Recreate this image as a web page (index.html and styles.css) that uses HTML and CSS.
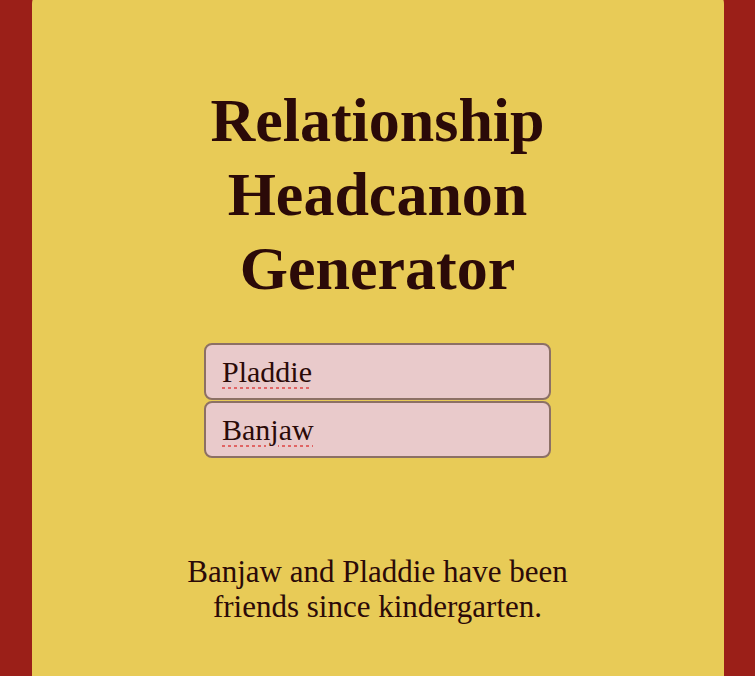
FILE: index.html
```html
<!DOCTYPE html>
<html lang="en">
<head>
  <meta charset="UTF-8">
  <title>Relationship Headcanon Generator</title>
  <link rel="stylesheet" href="styles.css">
</head>
<body>
  <div class="card">
    <h1 class="title">Relationship Headcanon Generator</h1>

    <div class="names">
      <input class="name-input" type="text" value="Pladdie">
      <input class="name-input" type="text" value="Banjaw">
    </div>

    <p class="result">Banjaw and Pladdie have been friends since kindergarten.</p>
  </div>
</body>
</html>
```

FILE: styles.css
```css
/* Page */
body {
  margin: 0;
  height: 100vh;
  background-color: #9b1f18;
  color: #2b0a08;
  font-family: "Liberation Serif", "Times New Roman", serif;
  overflow: hidden;
}

/* Yellow card (runs off the bottom of the page) */
.card {
  width: 692px;
  height: 686px;
  margin: -10px auto 0;
  padding: 93px 0 0;
  box-sizing: border-box;
  background-color: #e8cb57;
  border-radius: 14px 14px 0 0;
  display: flex;
  flex-direction: column;
  align-items: center;
}

.title {
  margin: 0;
  width: 420px;
  font-size: 62px;
  line-height: 74px;
  font-weight: bold;
  text-align: center;
}

/* Name inputs */
.names {
  margin-top: 38px;
  display: flex;
  flex-direction: column;
  gap: 1px;
}
.name-input {
  width: 347px;
  height: 57px;
  box-sizing: border-box;
  padding: 0 16px;
  border: 2px solid #8c7065;
  border-radius: 8px;
  background-color: #e9cacb;
  color: #2b0a08;
  font-family: inherit;
  font-size: 30px;
  text-decoration: underline dotted #e06464;
  text-decoration-thickness: 3px;
  text-underline-offset: 5px;
  outline: none;
}

/* Result text */
.result {
  margin: 96px 0 0;
  width: 410px;
  font-size: 31px;
  line-height: 35px;
  text-align: center;
}
```
